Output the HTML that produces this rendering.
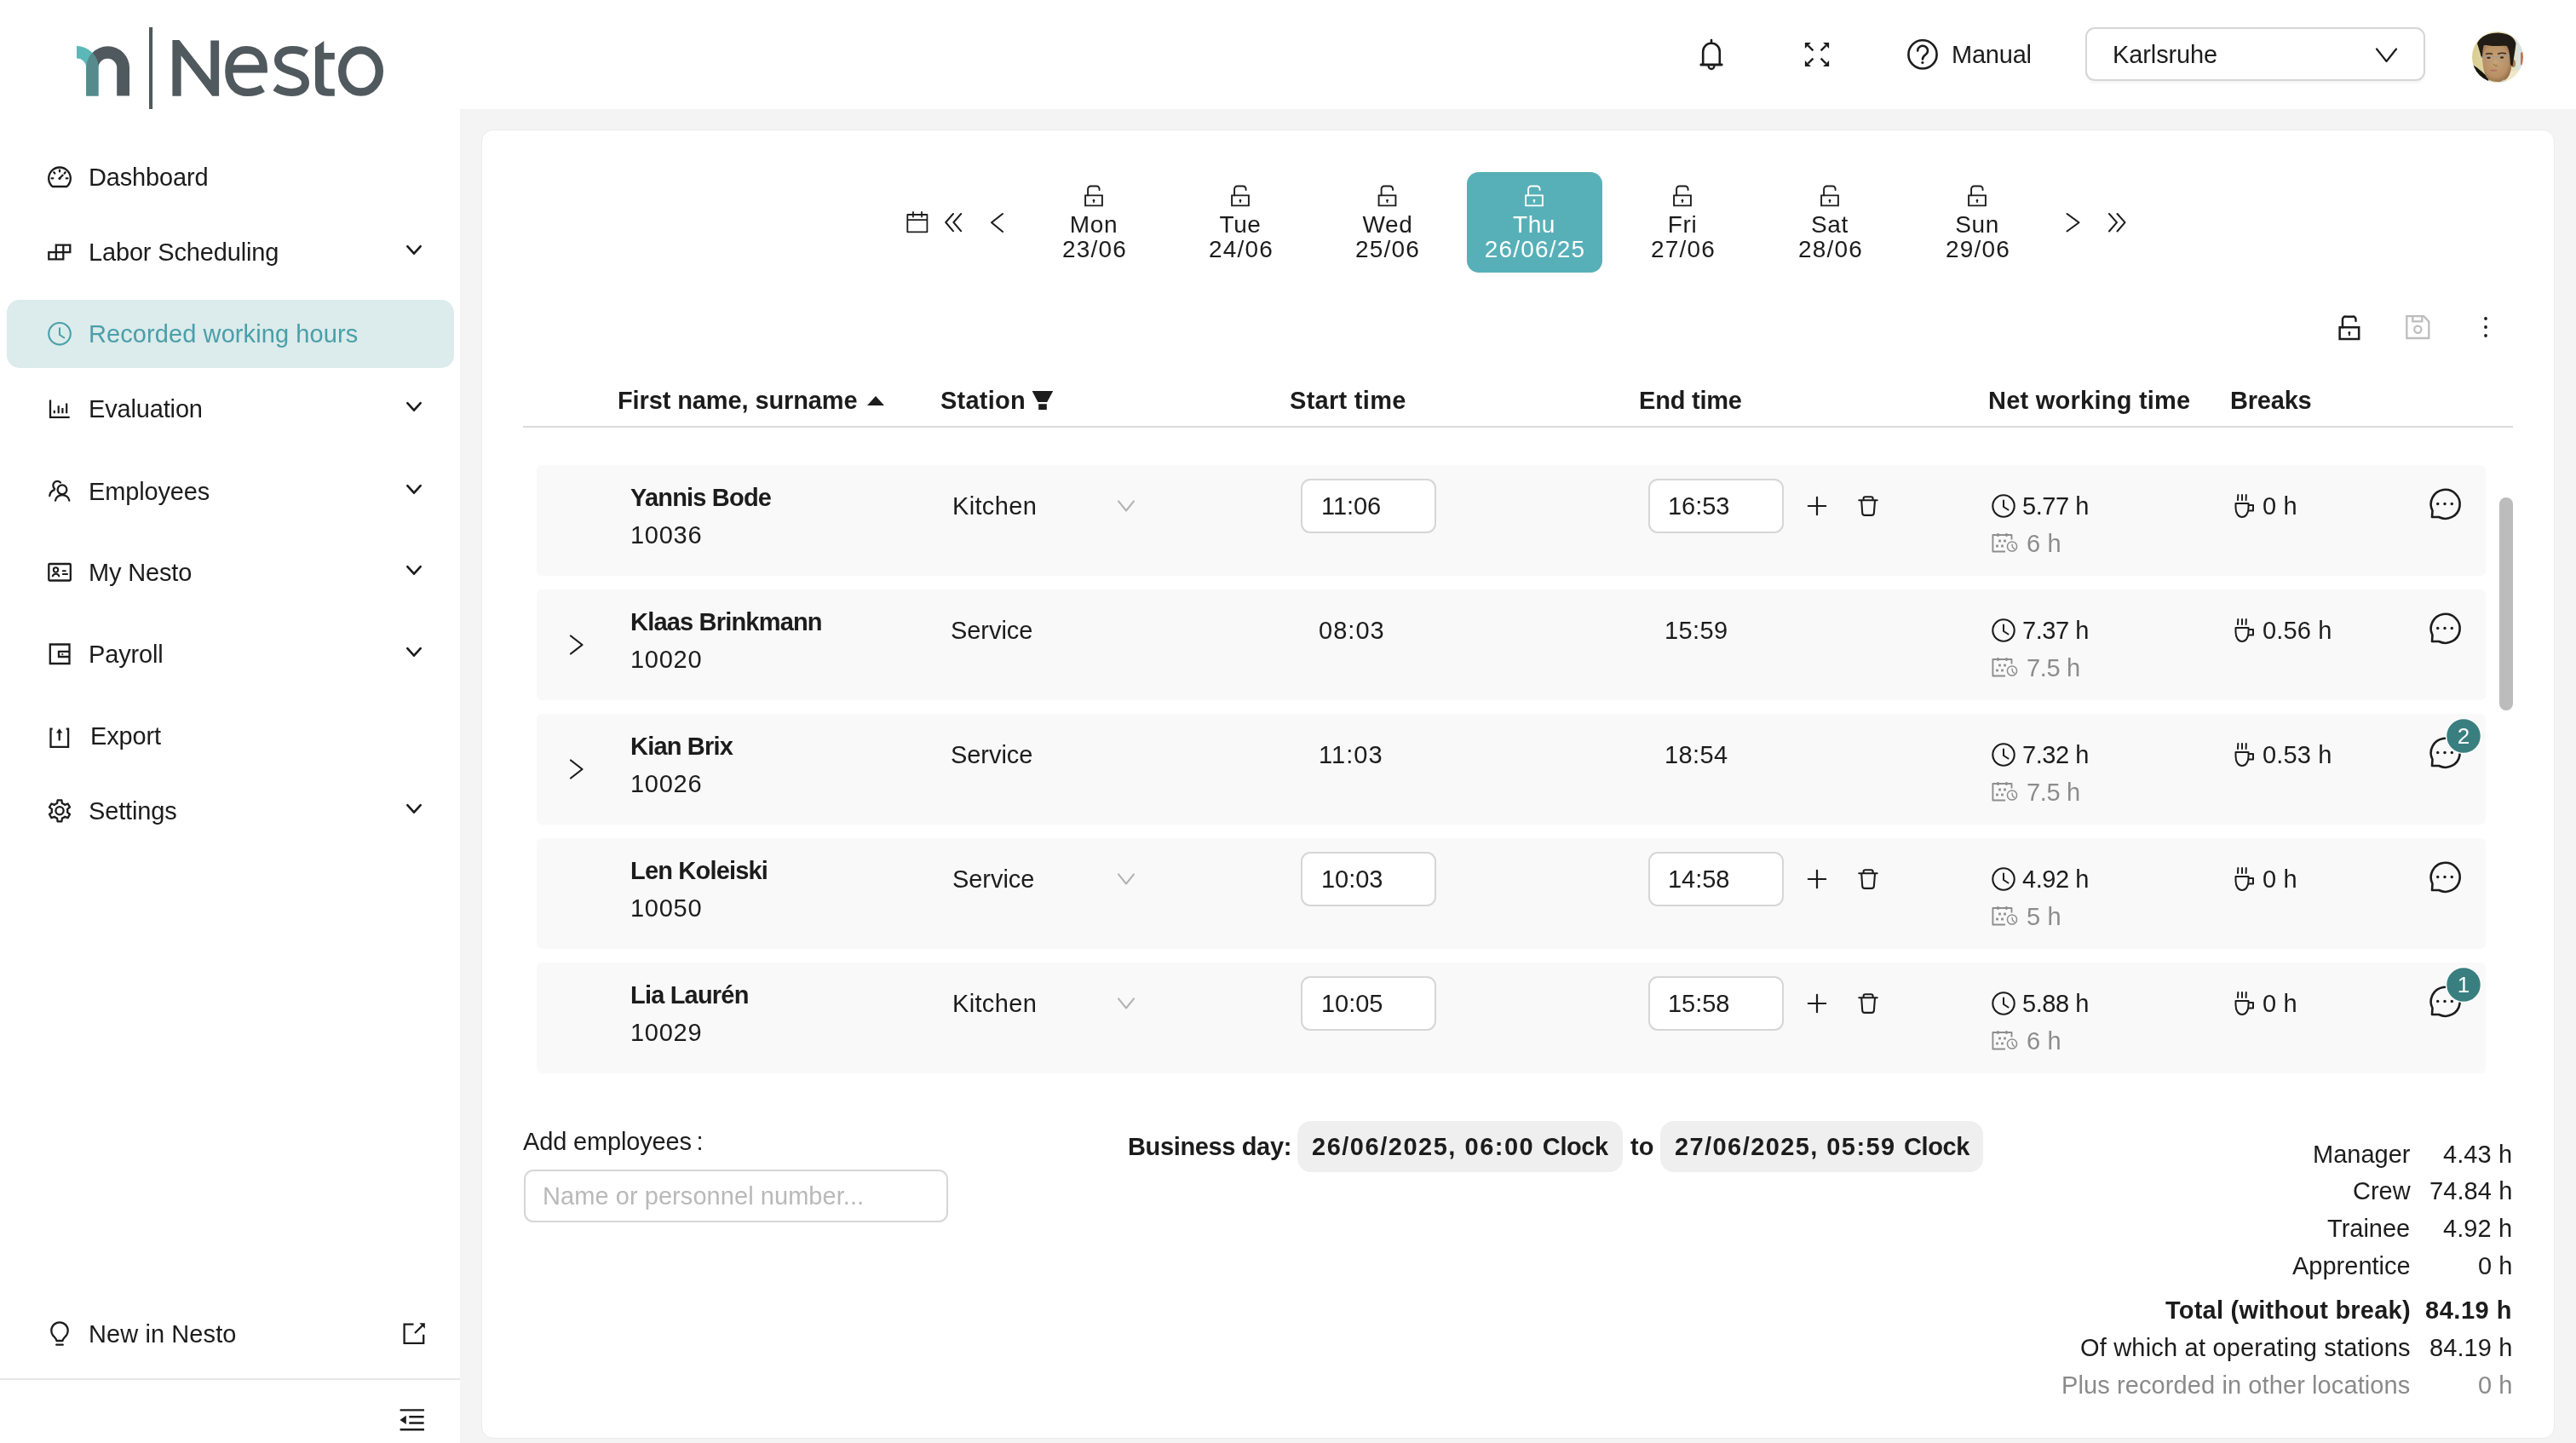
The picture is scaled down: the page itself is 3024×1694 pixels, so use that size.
<!DOCTYPE html>
<html><head><meta charset="utf-8"><title>Nesto - Recorded working hours</title>
<style>
html,body{margin:0;padding:0;width:3024px;height:1694px;overflow:hidden;background:#ffffff;}
body{position:relative;font-family:'Liberation Sans', sans-serif;}
.t{position:absolute;white-space:nowrap;font-family:'Liberation Sans', sans-serif;line-height:normal;will-change:transform;}
svg.ov{position:absolute;left:0;top:0;}
</style></head><body>
<div style="position:absolute;left:540px;top:128px;width:2484px;height:1566px;background:#f4f4f4;border-radius:0px;"></div>
<div style="position:absolute;left:565px;top:152px;width:2434px;height:1537px;background:#ffffff;border-radius:14px;box-sizing:border-box;border:1.5px solid #ebebeb;"></div>
<div style="position:absolute;left:0px;top:1618px;width:540px;height:2px;background:#e6e6e6;border-radius:0px;"></div>
<div style="position:absolute;left:8px;top:352px;width:525px;height:80px;background:#dcebeb;border-radius:15px;"></div>
<div style="position:absolute;left:1722px;top:202px;width:159px;height:118px;background:#57b0b8;border-radius:14px;"></div>
<div style="position:absolute;left:614px;top:500px;width:2336px;height:2px;background:#dadada;border-radius:0px;"></div>
<div style="position:absolute;left:630px;top:546px;width:2288px;height:130px;background:#f9f9f9;border-radius:6px;"></div>
<div style="position:absolute;left:630px;top:692px;width:2288px;height:130px;background:#f9f9f9;border-radius:6px;"></div>
<div style="position:absolute;left:630px;top:838px;width:2288px;height:130px;background:#f9f9f9;border-radius:6px;"></div>
<div style="position:absolute;left:630px;top:984px;width:2288px;height:130px;background:#f9f9f9;border-radius:6px;"></div>
<div style="position:absolute;left:630px;top:1130px;width:2288px;height:130px;background:#f9f9f9;border-radius:6px;"></div>
<div style="position:absolute;left:2934px;top:584px;width:16px;height:250px;background:#bcbcbc;border-radius:8px;"></div>
<div style="position:absolute;left:2448px;top:32px;width:399px;height:63px;background:#ffffff;border-radius:11px;box-sizing:border-box;border:2px solid #d6d6d6;box-shadow:0 3px 2px rgba(0,0,0,0.035);"></div>
<div style="position:absolute;left:615px;top:1373px;width:498px;height:62px;background:#ffffff;border-radius:11px;box-sizing:border-box;border:2px solid #d6d6d6;"></div>
<div style="position:absolute;left:1523px;top:1316px;width:382px;height:60px;background:#efefef;border-radius:16px;"></div>
<div style="position:absolute;left:1949px;top:1316px;width:379px;height:60px;background:#efefef;border-radius:16px;"></div>
<div style="position:absolute;left:1527px;top:562px;width:159px;height:64px;background:#ffffff;border-radius:11px;box-sizing:border-box;border:2px solid #d6d6d6;"></div>
<div style="position:absolute;left:1935px;top:562px;width:159px;height:64px;background:#ffffff;border-radius:11px;box-sizing:border-box;border:2px solid #d6d6d6;"></div>
<div style="position:absolute;left:1527px;top:1000px;width:159px;height:64px;background:#ffffff;border-radius:11px;box-sizing:border-box;border:2px solid #d6d6d6;"></div>
<div style="position:absolute;left:1935px;top:1000px;width:159px;height:64px;background:#ffffff;border-radius:11px;box-sizing:border-box;border:2px solid #d6d6d6;"></div>
<div style="position:absolute;left:1527px;top:1146px;width:159px;height:64px;background:#ffffff;border-radius:11px;box-sizing:border-box;border:2px solid #d6d6d6;"></div>
<div style="position:absolute;left:1935px;top:1146px;width:159px;height:64px;background:#ffffff;border-radius:11px;box-sizing:border-box;border:2px solid #d6d6d6;"></div>
<svg class="ov" width="3024" height="1694" viewBox="0 0 3024 1694">
<path d="M1313 588.3 L1322 599.5 L1331 588.3" stroke="#b3b3b3" stroke-width="2.1" fill="none" stroke-linecap="round" stroke-linejoin="round"/>
<path d="M2133 583.8 V604.2 M2122.8 594 H2143.2" stroke="#1c1c1c" stroke-width="2.2" fill="none" stroke-linecap="round"/>
<path d="M2182.3 587.2 H2203.7 M2187.6 587 V585.2 a2 2 0 0 1 2 -2 H2196.6 a2 2 0 0 1 2 2 V587 M2185.2 587.5 L2186.2 602 a3 3 0 0 0 3 2.9 H2196.9 a3 3 0 0 0 3 -2.9 L2201 587.5" stroke="#1c1c1c" stroke-width="2.1" fill="none" stroke-linecap="round" stroke-linejoin="round"/>
<circle cx="2352" cy="594" r="12.7" stroke="#1c1c1c" stroke-width="2.1" fill="none"/>
<path d="M2352 587.5 V595 L2357.5 598.5" stroke="#1c1c1c" stroke-width="2" fill="none" stroke-linecap="round" stroke-linejoin="round"/>
<path d="M2354 647.5 H2339.4 V628 H2361.5 V633.5 M2345.5 626 V630 M2355.5 626 V630" stroke="#8e8e8e" stroke-width="1.9" fill="none" stroke-linejoin="round" stroke-linecap="butt"/>
<rect x="2346.1" y="633.6" width="2.8" height="2.8" fill="#8e8e8e"/>
<rect x="2352.1" y="633.6" width="2.8" height="2.8" fill="#8e8e8e"/>
<rect x="2343.1" y="639.6" width="2.8" height="2.8" fill="#8e8e8e"/>
<rect x="2349.1" y="639.6" width="2.8" height="2.8" fill="#8e8e8e"/>
<circle cx="2362" cy="641.5" r="5.6" stroke="#8e8e8e" stroke-width="1.5" fill="none"/>
<path d="M2362 639.2 L2362.6 642.4 L2364.6 644.2" stroke="#8e8e8e" stroke-width="1.4" fill="none" stroke-linecap="round" stroke-linejoin="round"/>
<path d="M2627.3 581 L2627 587 M2632 581 V587 M2636.8 581 L2636.6 587 M2624.5 591 H2639.5 V596 C2639.5 603 2636 607 2632 607 C2628 607 2624.5 603 2624.5 596 Z M2639.5 593 H2645 V599.5 H2639.5" stroke="#1c1c1c" stroke-width="2" fill="none" stroke-linecap="round" stroke-linejoin="round"/>
<path d="M2855.5 599.5 A17 17 0 1 1 2863 607.0 L2855 607.0 Z" stroke="#1c1c1c" stroke-width="2.6" fill="none" stroke-linejoin="round" stroke-linecap="round"/>
<circle cx="2861.7" cy="591.5" r="1.7" fill="#1c1c1c"/>
<circle cx="2870" cy="591.5" r="1.7" fill="#1c1c1c"/>
<circle cx="2878.3" cy="591.5" r="1.7" fill="#1c1c1c"/>
<path d="M670 746.5 L683.5 757 L670 767.5" stroke="#1c1c1c" stroke-width="2.2" fill="none" stroke-linecap="round" stroke-linejoin="round"/>
<circle cx="2352" cy="740" r="12.7" stroke="#1c1c1c" stroke-width="2.1" fill="none"/>
<path d="M2352 733.5 V741 L2357.5 744.5" stroke="#1c1c1c" stroke-width="2" fill="none" stroke-linecap="round" stroke-linejoin="round"/>
<path d="M2354 793.5 H2339.4 V774 H2361.5 V779.5 M2345.5 772 V776 M2355.5 772 V776" stroke="#8e8e8e" stroke-width="1.9" fill="none" stroke-linejoin="round" stroke-linecap="butt"/>
<rect x="2346.1" y="779.6" width="2.8" height="2.8" fill="#8e8e8e"/>
<rect x="2352.1" y="779.6" width="2.8" height="2.8" fill="#8e8e8e"/>
<rect x="2343.1" y="785.6" width="2.8" height="2.8" fill="#8e8e8e"/>
<rect x="2349.1" y="785.6" width="2.8" height="2.8" fill="#8e8e8e"/>
<circle cx="2362" cy="787.5" r="5.6" stroke="#8e8e8e" stroke-width="1.5" fill="none"/>
<path d="M2362 785.2 L2362.6 788.4 L2364.6 790.2" stroke="#8e8e8e" stroke-width="1.4" fill="none" stroke-linecap="round" stroke-linejoin="round"/>
<path d="M2627.3 727 L2627 733 M2632 727 V733 M2636.8 727 L2636.6 733 M2624.5 737 H2639.5 V742 C2639.5 749 2636 753 2632 753 C2628 753 2624.5 749 2624.5 742 Z M2639.5 739 H2645 V745.5 H2639.5" stroke="#1c1c1c" stroke-width="2" fill="none" stroke-linecap="round" stroke-linejoin="round"/>
<path d="M2855.5 745.5 A17 17 0 1 1 2863 753.0 L2855 753.0 Z" stroke="#1c1c1c" stroke-width="2.6" fill="none" stroke-linejoin="round" stroke-linecap="round"/>
<circle cx="2861.7" cy="737.5" r="1.7" fill="#1c1c1c"/>
<circle cx="2870" cy="737.5" r="1.7" fill="#1c1c1c"/>
<circle cx="2878.3" cy="737.5" r="1.7" fill="#1c1c1c"/>
<path d="M670 892.5 L683.5 903 L670 913.5" stroke="#1c1c1c" stroke-width="2.2" fill="none" stroke-linecap="round" stroke-linejoin="round"/>
<circle cx="2352" cy="886" r="12.7" stroke="#1c1c1c" stroke-width="2.1" fill="none"/>
<path d="M2352 879.5 V887 L2357.5 890.5" stroke="#1c1c1c" stroke-width="2" fill="none" stroke-linecap="round" stroke-linejoin="round"/>
<path d="M2354 939.5 H2339.4 V920 H2361.5 V925.5 M2345.5 918 V922 M2355.5 918 V922" stroke="#8e8e8e" stroke-width="1.9" fill="none" stroke-linejoin="round" stroke-linecap="butt"/>
<rect x="2346.1" y="925.6" width="2.8" height="2.8" fill="#8e8e8e"/>
<rect x="2352.1" y="925.6" width="2.8" height="2.8" fill="#8e8e8e"/>
<rect x="2343.1" y="931.6" width="2.8" height="2.8" fill="#8e8e8e"/>
<rect x="2349.1" y="931.6" width="2.8" height="2.8" fill="#8e8e8e"/>
<circle cx="2362" cy="933.5" r="5.6" stroke="#8e8e8e" stroke-width="1.5" fill="none"/>
<path d="M2362 931.2 L2362.6 934.4 L2364.6 936.2" stroke="#8e8e8e" stroke-width="1.4" fill="none" stroke-linecap="round" stroke-linejoin="round"/>
<path d="M2627.3 873 L2627 879 M2632 873 V879 M2636.8 873 L2636.6 879 M2624.5 883 H2639.5 V888 C2639.5 895 2636 899 2632 899 C2628 899 2624.5 895 2624.5 888 Z M2639.5 885 H2645 V891.5 H2639.5" stroke="#1c1c1c" stroke-width="2" fill="none" stroke-linecap="round" stroke-linejoin="round"/>
<path d="M2855.5 891.5 A17 17 0 1 1 2863 899.0 L2855 899.0 Z" stroke="#1c1c1c" stroke-width="2.6" fill="none" stroke-linejoin="round" stroke-linecap="round"/>
<circle cx="2861.7" cy="883.5" r="1.7" fill="#1c1c1c"/>
<circle cx="2870" cy="883.5" r="1.7" fill="#1c1c1c"/>
<circle cx="2878.3" cy="883.5" r="1.7" fill="#1c1c1c"/>
<circle cx="2892" cy="864" r="20.5" fill="#397f80" stroke="#ffffff" stroke-width="1.5"/>
<path d="M1313 1026.3 L1322 1037.5 L1331 1026.3" stroke="#b3b3b3" stroke-width="2.1" fill="none" stroke-linecap="round" stroke-linejoin="round"/>
<path d="M2133 1021.8 V1042.2 M2122.8 1032 H2143.2" stroke="#1c1c1c" stroke-width="2.2" fill="none" stroke-linecap="round"/>
<path d="M2182.3 1025.2 H2203.7 M2187.6 1025 V1023.2 a2 2 0 0 1 2 -2 H2196.6 a2 2 0 0 1 2 2 V1025 M2185.2 1025.5 L2186.2 1040 a3 3 0 0 0 3 2.9 H2196.9 a3 3 0 0 0 3 -2.9 L2201 1025.5" stroke="#1c1c1c" stroke-width="2.1" fill="none" stroke-linecap="round" stroke-linejoin="round"/>
<circle cx="2352" cy="1032" r="12.7" stroke="#1c1c1c" stroke-width="2.1" fill="none"/>
<path d="M2352 1025.5 V1033 L2357.5 1036.5" stroke="#1c1c1c" stroke-width="2" fill="none" stroke-linecap="round" stroke-linejoin="round"/>
<path d="M2354 1085.5 H2339.4 V1066 H2361.5 V1071.5 M2345.5 1064 V1068 M2355.5 1064 V1068" stroke="#8e8e8e" stroke-width="1.9" fill="none" stroke-linejoin="round" stroke-linecap="butt"/>
<rect x="2346.1" y="1071.6" width="2.8" height="2.8" fill="#8e8e8e"/>
<rect x="2352.1" y="1071.6" width="2.8" height="2.8" fill="#8e8e8e"/>
<rect x="2343.1" y="1077.6" width="2.8" height="2.8" fill="#8e8e8e"/>
<rect x="2349.1" y="1077.6" width="2.8" height="2.8" fill="#8e8e8e"/>
<circle cx="2362" cy="1079.5" r="5.6" stroke="#8e8e8e" stroke-width="1.5" fill="none"/>
<path d="M2362 1077.2 L2362.6 1080.4 L2364.6 1082.2" stroke="#8e8e8e" stroke-width="1.4" fill="none" stroke-linecap="round" stroke-linejoin="round"/>
<path d="M2627.3 1019 L2627 1025 M2632 1019 V1025 M2636.8 1019 L2636.6 1025 M2624.5 1029 H2639.5 V1034 C2639.5 1041 2636 1045 2632 1045 C2628 1045 2624.5 1041 2624.5 1034 Z M2639.5 1031 H2645 V1037.5 H2639.5" stroke="#1c1c1c" stroke-width="2" fill="none" stroke-linecap="round" stroke-linejoin="round"/>
<path d="M2855.5 1037.5 A17 17 0 1 1 2863 1045.0 L2855 1045.0 Z" stroke="#1c1c1c" stroke-width="2.6" fill="none" stroke-linejoin="round" stroke-linecap="round"/>
<circle cx="2861.7" cy="1029.5" r="1.7" fill="#1c1c1c"/>
<circle cx="2870" cy="1029.5" r="1.7" fill="#1c1c1c"/>
<circle cx="2878.3" cy="1029.5" r="1.7" fill="#1c1c1c"/>
<path d="M1313 1172.3 L1322 1183.5 L1331 1172.3" stroke="#b3b3b3" stroke-width="2.1" fill="none" stroke-linecap="round" stroke-linejoin="round"/>
<path d="M2133 1167.8 V1188.2 M2122.8 1178 H2143.2" stroke="#1c1c1c" stroke-width="2.2" fill="none" stroke-linecap="round"/>
<path d="M2182.3 1171.2 H2203.7 M2187.6 1171 V1169.2 a2 2 0 0 1 2 -2 H2196.6 a2 2 0 0 1 2 2 V1171 M2185.2 1171.5 L2186.2 1186 a3 3 0 0 0 3 2.9 H2196.9 a3 3 0 0 0 3 -2.9 L2201 1171.5" stroke="#1c1c1c" stroke-width="2.1" fill="none" stroke-linecap="round" stroke-linejoin="round"/>
<circle cx="2352" cy="1178" r="12.7" stroke="#1c1c1c" stroke-width="2.1" fill="none"/>
<path d="M2352 1171.5 V1179 L2357.5 1182.5" stroke="#1c1c1c" stroke-width="2" fill="none" stroke-linecap="round" stroke-linejoin="round"/>
<path d="M2354 1231.5 H2339.4 V1212 H2361.5 V1217.5 M2345.5 1210 V1214 M2355.5 1210 V1214" stroke="#8e8e8e" stroke-width="1.9" fill="none" stroke-linejoin="round" stroke-linecap="butt"/>
<rect x="2346.1" y="1217.6" width="2.8" height="2.8" fill="#8e8e8e"/>
<rect x="2352.1" y="1217.6" width="2.8" height="2.8" fill="#8e8e8e"/>
<rect x="2343.1" y="1223.6" width="2.8" height="2.8" fill="#8e8e8e"/>
<rect x="2349.1" y="1223.6" width="2.8" height="2.8" fill="#8e8e8e"/>
<circle cx="2362" cy="1225.5" r="5.6" stroke="#8e8e8e" stroke-width="1.5" fill="none"/>
<path d="M2362 1223.2 L2362.6 1226.4 L2364.6 1228.2" stroke="#8e8e8e" stroke-width="1.4" fill="none" stroke-linecap="round" stroke-linejoin="round"/>
<path d="M2627.3 1165 L2627 1171 M2632 1165 V1171 M2636.8 1165 L2636.6 1171 M2624.5 1175 H2639.5 V1180 C2639.5 1187 2636 1191 2632 1191 C2628 1191 2624.5 1187 2624.5 1180 Z M2639.5 1177 H2645 V1183.5 H2639.5" stroke="#1c1c1c" stroke-width="2" fill="none" stroke-linecap="round" stroke-linejoin="round"/>
<path d="M2855.5 1183.5 A17 17 0 1 1 2863 1191.0 L2855 1191.0 Z" stroke="#1c1c1c" stroke-width="2.6" fill="none" stroke-linejoin="round" stroke-linecap="round"/>
<circle cx="2861.7" cy="1175.5" r="1.7" fill="#1c1c1c"/>
<circle cx="2870" cy="1175.5" r="1.7" fill="#1c1c1c"/>
<circle cx="2878.3" cy="1175.5" r="1.7" fill="#1c1c1c"/>
<circle cx="2892" cy="1156" r="20.5" fill="#397f80" stroke="#ffffff" stroke-width="1.5"/>
<path d="M478.3 289.2 L486 297.7 L493.7 289.2" stroke="#1c1c1c" stroke-width="2.6" fill="none" stroke-linecap="round" stroke-linejoin="round"/>
<path d="M478.3 473.2 L486 481.7 L493.7 473.2" stroke="#1c1c1c" stroke-width="2.6" fill="none" stroke-linecap="round" stroke-linejoin="round"/>
<path d="M478.3 570.2 L486 578.7 L493.7 570.2" stroke="#1c1c1c" stroke-width="2.6" fill="none" stroke-linecap="round" stroke-linejoin="round"/>
<path d="M478.3 665.2 L486 673.7 L493.7 665.2" stroke="#1c1c1c" stroke-width="2.6" fill="none" stroke-linecap="round" stroke-linejoin="round"/>
<path d="M478.3 761.2 L486 769.7 L493.7 761.2" stroke="#1c1c1c" stroke-width="2.6" fill="none" stroke-linecap="round" stroke-linejoin="round"/>
<path d="M478.3 945.2 L486 953.7 L493.7 945.2" stroke="#1c1c1c" stroke-width="2.6" fill="none" stroke-linecap="round" stroke-linejoin="round"/>
<path d="M61.5 219 A12.85 12.85 0 1 1 78.5 219 Z" stroke="#1c1c1c" stroke-width="2.3" fill="none" stroke-linecap="round" stroke-linejoin="round"/>
<path d="M70 199.6 V201.4 M60.6 209.3 H62.3 M77.7 209.3 H79.4 M63.3 202.3 L64.3 203.5 M76.7 202.3 L75.7 203.5 M70 209.3 L73.6 205.7" stroke="#1c1c1c" stroke-width="2.3" fill="none" stroke-linecap="round" stroke-linejoin="round"/>
<circle cx="70" cy="209.5" r="1.6" fill="#1c1c1c"/>
<path d="M65.8 296.2 V287.6 H82.3 V296.2 H57.3 V304.3 H74.3 V287.6 M65.8 296.2 V304.3" stroke="#1c1c1c" stroke-width="2.3" fill="none" stroke-linecap="butt" stroke-linejoin="miter"/>
<circle cx="70" cy="391.8" r="12.8" stroke="#4a9fa9" stroke-width="2.1" fill="none"/>
<path d="M70 385.3 V393 L75.3 396.5" stroke="#4a9fa9" stroke-width="2" fill="none" stroke-linecap="round" stroke-linejoin="round"/>
<path d="M59 469.5 V489.8 H81.7" stroke="#1c1c1c" stroke-width="2.3" fill="none" stroke-linecap="butt" stroke-linejoin="miter"/>
<path d="M63.8 481.7 V485.3 M68.7 476.3 V485.3 M73.4 479 V485.3 M78.2 473.6 V485.3" stroke="#1c1c1c" stroke-width="2.2" fill="none" stroke-linecap="butt"/>
<circle cx="73" cy="574.8" r="5.4" stroke="#1c1c1c" stroke-width="2.3" fill="none" stroke-linecap="round" stroke-linejoin="round"/>
<path d="M65 587.7 A8.2 7.5 0 0 1 81.3 587.7" stroke="#1c1c1c" stroke-width="2.3" fill="none" stroke-linecap="round" stroke-linejoin="round"/>
<path d="M71 566.5 A5 5 0 1 0 64.2 573.8" stroke="#1c1c1c" stroke-width="2.3" fill="none" stroke-linecap="round" stroke-linejoin="round"/>
<path d="M58.3 582 A8 8 0 0 1 63.6 575.2" stroke="#1c1c1c" stroke-width="2.3" fill="none" stroke-linecap="round" stroke-linejoin="round"/>
<rect x="57.3" y="662" width="25.5" height="19.5" rx="1" stroke="#1c1c1c" stroke-width="2.3" fill="none" stroke-linecap="round" stroke-linejoin="round"/>
<circle cx="65.5" cy="669" r="2.7" stroke="#1c1c1c" stroke-width="2" fill="none"/>
<path d="M61.8 676.3 A4 4 0 0 1 69.3 676.3 M73.8 670.3 H76.8 M73.8 674 H79" stroke="#1c1c1c" stroke-width="2.1" fill="none" stroke-linecap="round"/>
<path d="M81.5 764.8 V756.5 H58.8 V779 H81.5 V771 M81.5 764.8 H69 V771 H81.5 Z" stroke="#1c1c1c" stroke-width="2.3" fill="none" stroke-linecap="round" stroke-linejoin="miter"/>
<circle cx="73.3" cy="768" r="1.1" fill="#1c1c1c"/>
<path d="M61.7 855.7 H59.5 V876.9 H80.1 V855.7 H77.7" stroke="#1c1c1c" stroke-width="2.3" fill="none" stroke-linecap="butt" stroke-linejoin="miter"/>
<path d="M69.7 868.6 V858" stroke="#1c1c1c" stroke-width="2.3" fill="none" stroke-linecap="round" stroke-linejoin="round"/>
<path d="M66 860.5 L69.7 855.2 L73.4 860.5 Z" fill="#1c1c1c"/>
<path d="M65.35 943.75 L67.07 942.97 L67.62 939.32 L72.38 939.32 L72.93 942.97 L74.65 943.75 L76.18 944.85 L79.61 943.50 L81.99 947.62 L79.11 949.92 L79.30 951.80 L79.11 953.68 L81.99 955.98 L79.61 960.10 L76.18 958.75 L74.65 959.85 L72.93 960.63 L72.38 964.28 L67.62 964.28 L67.07 960.63 L65.35 959.85 L63.82 958.75 L60.39 960.10 L58.01 955.98 L60.89 953.68 L60.70 951.80 L60.89 949.92 L58.01 947.62 L60.39 943.50 L63.82 944.85 Z" stroke="#1c1c1c" stroke-width="2.3" fill="none" stroke-linecap="round" stroke-linejoin="round"/>
<circle cx="70" cy="951.8" r="4.6" stroke="#1c1c1c" stroke-width="2.3" fill="none" stroke-linecap="round" stroke-linejoin="round"/>
<path d="M66.6 1574 C66 1571 63.5 1569.5 62 1567.5 C60.8 1565.8 60.3 1564 60.3 1562 A9.7 9.7 0 0 1 79.7 1562 C79.7 1564 79.2 1565.8 78 1567.5 C76.5 1569.5 74 1571 73.4 1574 Z" stroke="#1c1c1c" stroke-width="2.3" fill="none" stroke-linecap="round" stroke-linejoin="round"/>
<path d="M66.3 1578.6 H73.7" stroke="#1c1c1c" stroke-width="2.4" fill="none" stroke-linecap="round" stroke-linejoin="round"/>
<path d="M485.5 1554.6 H474.6 V1576.9 H497.2 V1566.8" stroke="#1c1c1c" stroke-width="2.3" fill="none" stroke-linecap="butt" stroke-linejoin="miter"/>
<path d="M487 1565 L495.8 1556.2" stroke="#1c1c1c" stroke-width="2.3" fill="none"/>
<path d="M492.3 1553.2 H498.8 V1559.7 Z" fill="#1c1c1c"/>
<path d="M469.6 1655.4 H498 M480.3 1663.2 H497.6 M480.3 1670.5 H497.6 M469.6 1678.3 H498" stroke="#1c1c1c" stroke-width="2.4" fill="none"/>
<path d="M469.4 1666.9 L476.8 1661.8 V1672 Z" fill="#1c1c1c"/>
<defs><clipPath id="nclip"><path d="M101.2 112.5 V79.6 A25.4 25.4 0 0 1 152 79.6 V112.5 H137.2 V79.6 A10.9 10.9 0 0 0 115.4 79.6 V112.5 Z"/></clipPath></defs>
<path d="M101.2 112.5 V79.6 A25.4 25.4 0 0 1 152 79.6 V112.5 H137.2 V79.6 A10.9 10.9 0 0 0 115.4 79.6 V112.5 Z" fill="#50595e"/>
<path d="M90 54.099999999999994 A25.5 25.5 0 0 1 115.5 79.6 V112.5 H101.2 V79.6 A11.0 11.0 0 0 0 90 68.6 Z" fill="#5cb8b8"/>
<path d="M90 54.099999999999994 A25.5 25.5 0 0 1 115.5 79.6 V112.5 H101.2 V79.6 A11.0 11.0 0 0 0 90 68.6 Z" fill="#578a8c" clip-path="url(#nclip)"/>
<rect x="175" y="32" width="4.1" height="96" fill="#50595e"/>
<path d="M202.4 112.8 V47 H210.5 L247.3 94 V47.6 H257.1 V112.8 H249.2 L212.6 65.3 V112.8 Z" fill="#50595e"/>
<path d="M268.8 80.9 H309.3 C309.3 66 301 58.5 289.2 58.5 C276 58.5 268.8 68.5 268.8 83.5 C268.8 99 277.5 108.5 291 108.5 C298 108.5 304 106.5 308.5 103.8" stroke="#50595e" stroke-width="9.2" fill="none"/>
<path d="M359.5 63 C355 60 349.5 58.6 343.5 58.6 C333 58.6 326.5 63.5 326.5 70.6 C326.5 77.5 331.5 80.5 342 83.8 C353 87.2 358.5 90 358.5 97.5 C358.5 104.5 351.5 108.4 342 108.4 C335 108.4 328.5 106.3 323 102.5" stroke="#50595e" stroke-width="9" fill="none"/>
<path d="M370 55.5 L380.3 48 V98 C380.3 102.5 382.5 104.2 386.5 104.2 H392.8 V112.8 H385 C375.5 112.8 370 108.5 370 99 Z M380 62 H392.8 V69.8 H380 Z" fill="#50595e"/>
<ellipse cx="423.5" cy="83.45" rx="21.8" ry="24.6" stroke="#50595e" stroke-width="9.4" fill="none"/>
<path d="M1999.2 75.5 V60.5 A9.8 9.8 0 0 1 2018.8 60.5 V75.5" stroke="#1c1c1c" stroke-width="2.6" fill="none" stroke-linecap="round" stroke-linejoin="round"/>
<path d="M1996.8 76 H2021.2" stroke="#1c1c1c" stroke-width="2.8" fill="none" stroke-linecap="round" stroke-linejoin="round"/>
<path d="M2009 47 V50.5" stroke="#1c1c1c" stroke-width="2.6" fill="none" stroke-linecap="round" stroke-linejoin="round"/>
<path d="M2005.6 77.6 A3.4 3.4 0 0 0 2012.4 77.6" stroke="#1c1c1c" stroke-width="2.3" fill="none" stroke-linecap="round" stroke-linejoin="round"/>
<path d="M2128.4 59.4 L2122.5 53.5" stroke="#1c1c1c" stroke-width="2.4" fill="none"/>
<path d="M2118.9 49.9 L2125.9 49.9 L2118.9 56.9 Z" fill="#1c1c1c"/>
<path d="M2128.4 68.6 L2122.5 74.5" stroke="#1c1c1c" stroke-width="2.4" fill="none"/>
<path d="M2118.9 78.1 L2125.9 78.1 L2118.9 71.1 Z" fill="#1c1c1c"/>
<path d="M2137.6 59.4 L2143.5 53.5" stroke="#1c1c1c" stroke-width="2.4" fill="none"/>
<path d="M2147.1 49.9 L2140.1 49.9 L2147.1 56.9 Z" fill="#1c1c1c"/>
<path d="M2137.6 68.6 L2143.5 74.5" stroke="#1c1c1c" stroke-width="2.4" fill="none"/>
<path d="M2147.1 78.1 L2140.1 78.1 L2147.1 71.1 Z" fill="#1c1c1c"/>
<circle cx="2257" cy="63.9" r="16.6" stroke="#1c1c1c" stroke-width="2.6" fill="none"/>
<path d="M2251.2 59.6 A5.9 5.6 0 1 1 2260.6 63.9 C2258.2 65.6 2257 66.8 2256.9 69.6" stroke="#1c1c1c" stroke-width="2.5" fill="none" stroke-linecap="round" stroke-linejoin="round"/>
<circle cx="2256.9" cy="73.5" r="1.6" fill="#1c1c1c"/>
<path d="M2790 57.5 L2801.5 72 L2813 57.5" stroke="#1c1c1c" stroke-width="2.2" fill="none" stroke-linecap="round" stroke-linejoin="round"/>
<defs><clipPath id="av"><circle cx="2932" cy="67" r="30"/></clipPath><filter id="avb" x="-10%" y="-10%" width="120%" height="120%"><feGaussianBlur stdDeviation="0.55"/></filter><linearGradient id="avbg" x1="0" y1="0" x2="1" y2="0"><stop offset="0" stop-color="#d6cb8e"/><stop offset="0.35" stop-color="#e2d8a6"/><stop offset="0.75" stop-color="#e6dfb8"/><stop offset="0.88" stop-color="#d5e4e6"/><stop offset="1" stop-color="#d9c9b0"/></linearGradient><radialGradient id="avface" cx="0.45" cy="0.45" r="0.6"><stop offset="0" stop-color="#c8a276"/><stop offset="0.7" stop-color="#b89066"/><stop offset="1" stop-color="#8f6a45"/></radialGradient></defs>
<g clip-path="url(#av)"><g filter="url(#avb)"><rect x="2898" y="33" width="68" height="68" fill="url(#avbg)"/><path d="M2959 62 L2964 60 L2964 78 L2959 76 Z" fill="#c07556"/><path d="M2945 85 L2964 80 L2964 100 L2940 100 Z" fill="#eee8c8"/><path d="M2900 74 C2906 78 2914 84 2922 92 L2920 100 L2898 100 Z" fill="#141210"/><ellipse cx="2950.5" cy="74.5" rx="2.5" ry="4.5" fill="#a47e55"/><path d="M2914 56 C2913.5 72 2915 86 2920 92 C2925 97 2936 97.5 2942 93 C2948 88 2949.5 76 2949 58 C2944 50 2922 48 2914 56 Z" fill="url(#avface)"/><path d="M2908 51 C2911 43 2921 38.5 2933 38.5 C2945 39 2952 44 2953.5 51 C2952.5 60 2950.5 70 2949.5 78 L2947 76 C2946.5 67 2946 59 2943 54 C2936 53 2930 55 2922 53.5 C2919 52.5 2917 53 2915.5 54 C2914.5 58 2914 63 2914 68 L2912.5 66 C2911 60 2909.5 56 2908 51 Z" fill="#231c16"/><path d="M2918 63.5 Q2922 62 2926 63.5 M2932 63.5 Q2937 61.5 2942 63" stroke="#3a2c20" stroke-width="1.5" fill="none"/><ellipse cx="2921.5" cy="67.8" rx="2.2" ry="1.2" fill="#3b2a22"/><ellipse cx="2937" cy="67.5" rx="2.2" ry="1.2" fill="#3b2a22"/><path d="M2912.5 67 L2916 66.5 Q2922 65.5 2928 66.5 Q2930 67.5 2931 66.5 Q2938 65 2946 64.5 M2916 66.5 Q2915.5 72.5 2921 73 Q2927 73 2928 68 M2931 67 Q2932 72.5 2938 72.5 Q2944 72 2944 65" stroke="#9c9a94" stroke-width="0.9" fill="none"/><path d="M2927 75 Q2929 78.5 2932 77" stroke="#8a6644" stroke-width="1" fill="none"/><path d="M2922 82.5 Q2927 80.5 2932.5 82.5 Q2927 85.5 2922 82.5 Z" fill="#b8766a"/><path d="M2921 93 L2926 97 L2934 97 L2940 93 L2938 100 L2922 100 Z" fill="#c8ced2"/></g></g>
<path d="M1065.3 252 H1088.4 V272.3 H1065.3 Z M1065.3 258.2 H1088.4 M1071.9 249 V254.5 M1082 249 V254.5" stroke="#1c1c1c" stroke-width="1.8" fill="none" stroke-linejoin="round" stroke-linecap="round"/>
<path d="M1119 251 L1110.2 261 L1119 271.3 M1128.2 251 L1119.4 261 L1128.2 271.3" stroke="#1c1c1c" stroke-width="2" fill="none" stroke-linecap="round" stroke-linejoin="round"/>
<path d="M1177 251 L1164 261.2 L1177 272" stroke="#1c1c1c" stroke-width="2" fill="none" stroke-linecap="round" stroke-linejoin="round"/>
<path d="M2426.5 251 L2440.5 261.2 L2426.5 271.5" stroke="#1c1c1c" stroke-width="2" fill="none" stroke-linecap="round" stroke-linejoin="round"/>
<path d="M2476 251 L2485 261.2 L2476 271.5 M2485.5 251 L2494.5 261.2 L2485.5 271.5" stroke="#1c1c1c" stroke-width="2" fill="none" stroke-linecap="round" stroke-linejoin="round"/>
<path d="M1274.1 229.4 H1293.9 V241.4 H1274.1 Z" stroke="#1c1c1c" stroke-width="1.9" fill="none" stroke-linejoin="miter"/>
<path d="M1277.1 229.4 V222.0 A3.5 3.5 0 0 1 1280.6 218.5 H1287.2 A3.4 3.4 0 0 1 1290.6 221.9 V223.0" stroke="#1c1c1c" stroke-width="1.9" fill="none" stroke-linecap="round"/>
<path d="M1284 234.9 V237.4" stroke="#1c1c1c" stroke-width="1.6" stroke-linecap="round"/>
<circle cx="1284" cy="235.20000000000002" r="1.3" fill="#1c1c1c"/>
<path d="M1446.1 229.4 H1465.9 V241.4 H1446.1 Z" stroke="#1c1c1c" stroke-width="1.9" fill="none" stroke-linejoin="miter"/>
<path d="M1449.1 229.4 V222.0 A3.5 3.5 0 0 1 1452.6 218.5 H1459.2 A3.4 3.4 0 0 1 1462.6 221.9 V223.0" stroke="#1c1c1c" stroke-width="1.9" fill="none" stroke-linecap="round"/>
<path d="M1456 234.9 V237.4" stroke="#1c1c1c" stroke-width="1.6" stroke-linecap="round"/>
<circle cx="1456" cy="235.20000000000002" r="1.3" fill="#1c1c1c"/>
<path d="M1618.6 229.4 H1638.4 V241.4 H1618.6 Z" stroke="#1c1c1c" stroke-width="1.9" fill="none" stroke-linejoin="miter"/>
<path d="M1621.6 229.4 V222.0 A3.5 3.5 0 0 1 1625.1 218.5 H1631.7 A3.4 3.4 0 0 1 1635.1 221.9 V223.0" stroke="#1c1c1c" stroke-width="1.9" fill="none" stroke-linecap="round"/>
<path d="M1628.5 234.9 V237.4" stroke="#1c1c1c" stroke-width="1.6" stroke-linecap="round"/>
<circle cx="1628.5" cy="235.20000000000002" r="1.3" fill="#1c1c1c"/>
<path d="M1791.1 229.4 H1810.9 V241.4 H1791.1 Z" stroke="#ffffff" stroke-width="1.9" fill="none" stroke-linejoin="miter"/>
<path d="M1794.1 229.4 V222.0 A3.5 3.5 0 0 1 1797.6 218.5 H1804.2 A3.4 3.4 0 0 1 1807.6 221.9 V223.0" stroke="#ffffff" stroke-width="1.9" fill="none" stroke-linecap="round"/>
<path d="M1801 234.9 V237.4" stroke="#ffffff" stroke-width="1.6" stroke-linecap="round"/>
<circle cx="1801" cy="235.20000000000002" r="1.3" fill="#ffffff"/>
<path d="M1965.1 229.4 H1984.9 V241.4 H1965.1 Z" stroke="#1c1c1c" stroke-width="1.9" fill="none" stroke-linejoin="miter"/>
<path d="M1968.1 229.4 V222.0 A3.5 3.5 0 0 1 1971.6 218.5 H1978.2 A3.4 3.4 0 0 1 1981.6 221.9 V223.0" stroke="#1c1c1c" stroke-width="1.9" fill="none" stroke-linecap="round"/>
<path d="M1975 234.9 V237.4" stroke="#1c1c1c" stroke-width="1.6" stroke-linecap="round"/>
<circle cx="1975" cy="235.20000000000002" r="1.3" fill="#1c1c1c"/>
<path d="M2138.1 229.4 H2157.9 V241.4 H2138.1 Z" stroke="#1c1c1c" stroke-width="1.9" fill="none" stroke-linejoin="miter"/>
<path d="M2141.1 229.4 V222.0 A3.5 3.5 0 0 1 2144.6 218.5 H2151.2 A3.4 3.4 0 0 1 2154.6 221.9 V223.0" stroke="#1c1c1c" stroke-width="1.9" fill="none" stroke-linecap="round"/>
<path d="M2148 234.9 V237.4" stroke="#1c1c1c" stroke-width="1.6" stroke-linecap="round"/>
<circle cx="2148" cy="235.20000000000002" r="1.3" fill="#1c1c1c"/>
<path d="M2311.1 229.4 H2330.9 V241.4 H2311.1 Z" stroke="#1c1c1c" stroke-width="1.9" fill="none" stroke-linejoin="miter"/>
<path d="M2314.1 229.4 V222.0 A3.5 3.5 0 0 1 2317.6 218.5 H2324.2 A3.4 3.4 0 0 1 2327.6 221.9 V223.0" stroke="#1c1c1c" stroke-width="1.9" fill="none" stroke-linecap="round"/>
<path d="M2321 234.9 V237.4" stroke="#1c1c1c" stroke-width="1.6" stroke-linecap="round"/>
<circle cx="2321" cy="235.20000000000002" r="1.3" fill="#1c1c1c"/>
<path d="M2746.63 384.185 H2769.17 V397.985 H2746.63 Z" stroke="#1c1c1c" stroke-width="2.5" fill="none" stroke-linejoin="miter"/>
<path d="M2749.965 384.185 V375.675 A3.5 3.5 0 0 1 2753.9900000000002 371.65 H2761.58 A3.4 3.4 0 0 1 2765.4900000000002 375.56 V376.825" stroke="#1c1c1c" stroke-width="2.5" fill="none" stroke-linecap="round"/>
<path d="M2757.9 390.51 V393.385" stroke="#1c1c1c" stroke-width="1.8399999999999999" stroke-linecap="round"/>
<circle cx="2757.9" cy="390.855" r="1.4949999999999999" fill="#1c1c1c"/>
<path d="M2825.3 371.2 H2845.3 L2851.3 377.5 V397 H2825.3 Z M2832.3 371.5 V377.3 H2843.3 V371.5" stroke="#bdbdbd" stroke-width="2.3" fill="none" stroke-linejoin="miter"/>
<circle cx="2838.3" cy="386.8" r="4.1" stroke="#bdbdbd" stroke-width="2.2" fill="none"/>
<circle cx="2918" cy="374" r="1.9" fill="#1c1c1c"/>
<circle cx="2918" cy="384" r="1.9" fill="#1c1c1c"/>
<circle cx="2918" cy="394" r="1.9" fill="#1c1c1c"/>
<path d="M1018 476 H1038 L1028 465 Z" fill="#1c1c1c"/>
<path d="M1211.6 459 H1236.2 L1229.2 472 H1218.4 Z M1219.2 474.2 H1228.8 V480.9 H1219.2 Z" fill="#1c1c1c"/>
</svg>
<div class="t" style="left:740px;top:568px;font-size:29px;font-weight:700;color:#1c1c1c;letter-spacing:-0.81px;">Yannis Bode</div>
<div class="t" style="left:740px;top:612px;font-size:29px;font-weight:400;color:#1c1c1c;letter-spacing:0.74px;">10036</div>
<div class="t" style="left:1118px;top:578px;font-size:29px;font-weight:400;color:#1c1c1c;letter-spacing:0.34px;">Kitchen</div>
<div class="t" style="left:1551px;top:578px;font-size:29px;font-weight:400;color:#1c1c1c;letter-spacing:-0.06px;">11:06</div>
<div class="t" style="left:1958px;top:578px;font-size:29px;font-weight:400;color:#1c1c1c;letter-spacing:-0.06px;">16:53</div>
<div class="t" style="left:2374px;top:578px;font-size:29px;font-weight:400;color:#1c1c1c;letter-spacing:-0.46px;">5.77 h</div>
<div class="t" style="left:2378.5px;top:621.5px;font-size:29px;font-weight:400;color:#8c8c8c;letter-spacing:0.14px;">6 h</div>
<div class="t" style="left:2655.5px;top:578px;font-size:29px;font-weight:400;color:#1c1c1c;letter-spacing:0.14px;">0 h</div>
<div class="t" style="left:740px;top:714px;font-size:29px;font-weight:700;color:#1c1c1c;letter-spacing:-0.81px;">Klaas Brinkmann</div>
<div class="t" style="left:740px;top:758px;font-size:29px;font-weight:400;color:#1c1c1c;letter-spacing:0.74px;">10020</div>
<div class="t" style="left:1116px;top:724px;font-size:29px;font-weight:400;color:#1c1c1c;letter-spacing:-0.06px;">Service</div>
<div class="t" style="left:1547.5px;top:724px;font-size:29px;font-weight:400;color:#1c1c1c;letter-spacing:1.04px;">08:03</div>
<div class="t" style="left:1954px;top:724px;font-size:29px;font-weight:400;color:#1c1c1c;letter-spacing:0.39px;">15:59</div>
<div class="t" style="left:2374px;top:724px;font-size:29px;font-weight:400;color:#1c1c1c;letter-spacing:-0.46px;">7.37 h</div>
<div class="t" style="left:2378.5px;top:767.5px;font-size:29px;font-weight:400;color:#8c8c8c;letter-spacing:-0.36px;">7.5 h</div>
<div class="t" style="left:2655.5px;top:724px;font-size:29px;font-weight:400;color:#1c1c1c;letter-spacing:0.14px;">0.56 h</div>
<div class="t" style="left:740px;top:860px;font-size:29px;font-weight:700;color:#1c1c1c;letter-spacing:-0.81px;">Kian Brix</div>
<div class="t" style="left:740px;top:904px;font-size:29px;font-weight:400;color:#1c1c1c;letter-spacing:0.74px;">10026</div>
<div class="t" style="left:1116px;top:870px;font-size:29px;font-weight:400;color:#1c1c1c;letter-spacing:-0.06px;">Service</div>
<div class="t" style="left:1547.5px;top:870px;font-size:29px;font-weight:400;color:#1c1c1c;letter-spacing:1.04px;">11:03</div>
<div class="t" style="left:1954px;top:870px;font-size:29px;font-weight:400;color:#1c1c1c;letter-spacing:0.39px;">18:54</div>
<div class="t" style="left:2374px;top:870px;font-size:29px;font-weight:400;color:#1c1c1c;letter-spacing:-0.46px;">7.32 h</div>
<div class="t" style="left:2378.5px;top:913.5px;font-size:29px;font-weight:400;color:#8c8c8c;letter-spacing:-0.36px;">7.5 h</div>
<div class="t" style="left:2655.5px;top:870px;font-size:29px;font-weight:400;color:#1c1c1c;letter-spacing:0.14px;">0.53 h</div>
<div class="t" style="left:2592px;width:600px;text-align:center;top:849px;font-size:26px;font-weight:400;color:#ffffff;">2</div>
<div class="t" style="left:740px;top:1006px;font-size:29px;font-weight:700;color:#1c1c1c;letter-spacing:-0.81px;">Len Koleiski</div>
<div class="t" style="left:740px;top:1050px;font-size:29px;font-weight:400;color:#1c1c1c;letter-spacing:0.74px;">10050</div>
<div class="t" style="left:1118px;top:1016px;font-size:29px;font-weight:400;color:#1c1c1c;letter-spacing:-0.06px;">Service</div>
<div class="t" style="left:1551px;top:1016px;font-size:29px;font-weight:400;color:#1c1c1c;letter-spacing:-0.06px;">10:03</div>
<div class="t" style="left:1958px;top:1016px;font-size:29px;font-weight:400;color:#1c1c1c;letter-spacing:-0.06px;">14:58</div>
<div class="t" style="left:2374px;top:1016px;font-size:29px;font-weight:400;color:#1c1c1c;letter-spacing:-0.46px;">4.92 h</div>
<div class="t" style="left:2378.5px;top:1059.5px;font-size:29px;font-weight:400;color:#8c8c8c;letter-spacing:0.14px;">5 h</div>
<div class="t" style="left:2655.5px;top:1016px;font-size:29px;font-weight:400;color:#1c1c1c;letter-spacing:0.14px;">0 h</div>
<div class="t" style="left:740px;top:1152px;font-size:29px;font-weight:700;color:#1c1c1c;letter-spacing:-0.81px;">Lia Laur&eacute;n</div>
<div class="t" style="left:740px;top:1196px;font-size:29px;font-weight:400;color:#1c1c1c;letter-spacing:0.74px;">10029</div>
<div class="t" style="left:1118px;top:1162px;font-size:29px;font-weight:400;color:#1c1c1c;letter-spacing:0.34px;">Kitchen</div>
<div class="t" style="left:1551px;top:1162px;font-size:29px;font-weight:400;color:#1c1c1c;letter-spacing:-0.06px;">10:05</div>
<div class="t" style="left:1958px;top:1162px;font-size:29px;font-weight:400;color:#1c1c1c;letter-spacing:-0.06px;">15:58</div>
<div class="t" style="left:2374px;top:1162px;font-size:29px;font-weight:400;color:#1c1c1c;letter-spacing:-0.46px;">5.88 h</div>
<div class="t" style="left:2378.5px;top:1205.5px;font-size:29px;font-weight:400;color:#8c8c8c;letter-spacing:0.14px;">6 h</div>
<div class="t" style="left:2655.5px;top:1162px;font-size:29px;font-weight:400;color:#1c1c1c;letter-spacing:0.14px;">0 h</div>
<div class="t" style="left:2592px;width:600px;text-align:center;top:1141px;font-size:26px;font-weight:400;color:#ffffff;">1</div>
<div class="t" style="left:104px;top:192px;font-size:29px;font-weight:400;color:#1c1c1c;letter-spacing:-0.16px;">Dashboard</div>
<div class="t" style="left:104px;top:280px;font-size:29px;font-weight:400;color:#1c1c1c;letter-spacing:-0.16px;">Labor Scheduling</div>
<div class="t" style="left:104px;top:376px;font-size:29px;font-weight:400;color:#4a9fa9;letter-spacing:0.09px;">Recorded working hours</div>
<div class="t" style="left:104px;top:464px;font-size:29px;font-weight:400;color:#1c1c1c;letter-spacing:-0.16px;">Evaluation</div>
<div class="t" style="left:104px;top:561px;font-size:29px;font-weight:400;color:#1c1c1c;letter-spacing:-0.16px;">Employees</div>
<div class="t" style="left:104px;top:656px;font-size:29px;font-weight:400;color:#1c1c1c;letter-spacing:-0.16px;">My Nesto</div>
<div class="t" style="left:104px;top:752px;font-size:29px;font-weight:400;color:#1c1c1c;letter-spacing:-0.16px;">Payroll</div>
<div class="t" style="left:106px;top:848px;font-size:29px;font-weight:400;color:#1c1c1c;letter-spacing:-0.16px;">Export</div>
<div class="t" style="left:104px;top:936px;font-size:29px;font-weight:400;color:#1c1c1c;letter-spacing:-0.16px;">Settings</div>
<div class="t" style="left:104px;top:1550px;font-size:29px;font-weight:400;color:#1c1c1c;letter-spacing:0.09px;">New in Nesto</div>
<div class="t" style="left:2291px;top:48px;font-size:29px;font-weight:400;color:#1c1c1c;letter-spacing:-0.21px;">Manual</div>
<div class="t" style="left:2479.5px;top:48px;font-size:29px;font-weight:400;color:#1c1c1c;letter-spacing:-0.11px;">Karlsruhe</div>
<div class="t" style="left:984.3px;width:600px;text-align:center;top:248px;font-size:28px;font-weight:400;color:#1c1c1c;letter-spacing:0.6px;">Mon</div>
<div class="t" style="left:984.5999999999999px;width:600px;text-align:center;top:277px;font-size:28px;font-weight:400;color:#1c1c1c;letter-spacing:1.2px;">23/06</div>
<div class="t" style="left:1156.3px;width:600px;text-align:center;top:248px;font-size:28px;font-weight:400;color:#1c1c1c;letter-spacing:0.6px;">Tue</div>
<div class="t" style="left:1156.6px;width:600px;text-align:center;top:277px;font-size:28px;font-weight:400;color:#1c1c1c;letter-spacing:1.2px;">24/06</div>
<div class="t" style="left:1328.8px;width:600px;text-align:center;top:248px;font-size:28px;font-weight:400;color:#1c1c1c;letter-spacing:0.6px;">Wed</div>
<div class="t" style="left:1329.1px;width:600px;text-align:center;top:277px;font-size:28px;font-weight:400;color:#1c1c1c;letter-spacing:1.2px;">25/06</div>
<div class="t" style="left:1501.3px;width:600px;text-align:center;top:248px;font-size:28px;font-weight:400;color:#ffffff;letter-spacing:0.6px;">Thu</div>
<div class="t" style="left:1501.6px;width:600px;text-align:center;top:277px;font-size:28px;font-weight:400;color:#ffffff;letter-spacing:1.2px;">26/06/25</div>
<div class="t" style="left:1675.3px;width:600px;text-align:center;top:248px;font-size:28px;font-weight:400;color:#1c1c1c;letter-spacing:0.6px;">Fri</div>
<div class="t" style="left:1675.6px;width:600px;text-align:center;top:277px;font-size:28px;font-weight:400;color:#1c1c1c;letter-spacing:1.2px;">27/06</div>
<div class="t" style="left:1848.3000000000002px;width:600px;text-align:center;top:248px;font-size:28px;font-weight:400;color:#1c1c1c;letter-spacing:0.6px;">Sat</div>
<div class="t" style="left:1848.6px;width:600px;text-align:center;top:277px;font-size:28px;font-weight:400;color:#1c1c1c;letter-spacing:1.2px;">28/06</div>
<div class="t" style="left:2021.3000000000002px;width:600px;text-align:center;top:248px;font-size:28px;font-weight:400;color:#1c1c1c;letter-spacing:0.6px;">Sun</div>
<div class="t" style="left:2021.6px;width:600px;text-align:center;top:277px;font-size:28px;font-weight:400;color:#1c1c1c;letter-spacing:1.2px;">29/06</div>
<div class="t" style="left:725px;top:454px;font-size:29px;font-weight:700;color:#1c1c1c;letter-spacing:-0.11px;">First name, surname</div>
<div class="t" style="left:1103.5px;top:454px;font-size:29px;font-weight:700;color:#1c1c1c;letter-spacing:0.24px;">Station</div>
<div class="t" style="left:1513.5px;top:454px;font-size:29px;font-weight:700;color:#1c1c1c;letter-spacing:0.29px;">Start time</div>
<div class="t" style="left:1924px;top:454px;font-size:29px;font-weight:700;color:#1c1c1c;letter-spacing:-0.21px;">End time</div>
<div class="t" style="left:2333.5px;top:454px;font-size:29px;font-weight:700;color:#1c1c1c;letter-spacing:0.24px;">Net working time</div>
<div class="t" style="left:2618px;top:454px;font-size:29px;font-weight:700;color:#1c1c1c;letter-spacing:-0.21px;">Breaks</div>
<div class="t" style="left:614px;top:1324px;font-size:29px;font-weight:400;color:#1c1c1c;letter-spacing:-0.16px;">Add employees&#8201;:</div>
<div class="t" style="left:637px;top:1388px;font-size:29px;font-weight:400;color:#b9b9b9;letter-spacing:0.06px;">Name or personnel number...</div>
<div class="t" style="left:1324px;top:1330px;font-size:29px;font-weight:700;color:#1c1c1c;letter-spacing:-0.36px;">Business day:</div>
<div class="t" style="left:1540px;top:1330px;font-size:29px;font-weight:700;color:#1c1c1c;letter-spacing:-0.41px;"><span style="letter-spacing:1.52px">26/06/2025, 06:00 </span>Clock</div>
<div class="t" style="left:1914px;top:1330px;font-size:29px;font-weight:700;color:#1c1c1c;letter-spacing:-0.01px;">to</div>
<div class="t" style="left:1965.5px;top:1330px;font-size:29px;font-weight:700;color:#1c1c1c;letter-spacing:-0.41px;"><span style="letter-spacing:1.42px">27/06/2025, 05:59 </span>Clock</div>
<div class="t" style="right:194.5px;text-align:right;top:1339px;font-size:29px;font-weight:400;color:#1c1c1c;">Manager</div>
<div class="t" style="right:74.91px;text-align:right;top:1339px;font-size:29px;font-weight:400;color:#1c1c1c;letter-spacing:0.09px;">4.43 h</div>
<div class="t" style="right:194.5px;text-align:right;top:1382px;font-size:29px;font-weight:400;color:#1c1c1c;">Crew</div>
<div class="t" style="right:74.91px;text-align:right;top:1382px;font-size:29px;font-weight:400;color:#1c1c1c;letter-spacing:0.09px;">74.84 h</div>
<div class="t" style="right:194.5px;text-align:right;top:1426px;font-size:29px;font-weight:400;color:#1c1c1c;">Trainee</div>
<div class="t" style="right:74.91px;text-align:right;top:1426px;font-size:29px;font-weight:400;color:#1c1c1c;letter-spacing:0.09px;">4.92 h</div>
<div class="t" style="right:194.5px;text-align:right;top:1470px;font-size:29px;font-weight:400;color:#1c1c1c;">Apprentice</div>
<div class="t" style="right:74.91px;text-align:right;top:1470px;font-size:29px;font-weight:400;color:#1c1c1c;letter-spacing:0.09px;">0 h</div>
<div class="t" style="right:194.27px;text-align:right;top:1522px;font-size:29px;font-weight:700;color:#1c1c1c;letter-spacing:0.23px;">Total (without break)</div>
<div class="t" style="right:74.46px;text-align:right;top:1522px;font-size:29px;font-weight:700;color:#1c1c1c;letter-spacing:0.54px;">84.19 h</div>
<div class="t" style="right:194.31px;text-align:right;top:1566px;font-size:29px;font-weight:400;color:#1c1c1c;letter-spacing:0.19px;">Of which at operating stations</div>
<div class="t" style="right:74.91px;text-align:right;top:1566px;font-size:29px;font-weight:400;color:#1c1c1c;letter-spacing:0.09px;">84.19 h</div>
<div class="t" style="right:194.4px;text-align:right;top:1610px;font-size:29px;font-weight:400;color:#8a8a8a;letter-spacing:0.1px;">Plus recorded in other locations</div>
<div class="t" style="right:74.91px;text-align:right;top:1610px;font-size:29px;font-weight:400;color:#8a8a8a;letter-spacing:0.09px;">0 h</div>
</body></html>
